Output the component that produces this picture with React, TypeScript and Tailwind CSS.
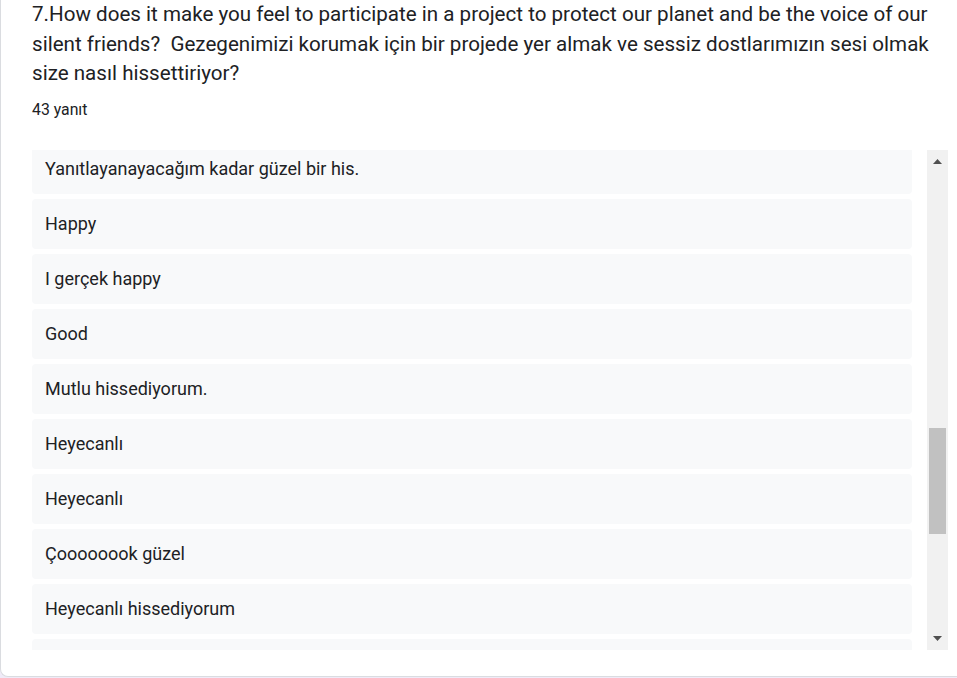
const answers = [
  'Yanıtlayanayacağım kadar güzel bir his.',
  'Happy',
  'I gerçek happy',
  'Good',
  'Mutlu hissediyorum.',
  'Heyecanlı',
  'Heyecanlı',
  'Çoooooook güzel',
  'Heyecanlı hissediyorum',
  '',
];

function ScrollBar() {
  return (
    <div className="relative h-full w-[21px] shrink-0 bg-[#f1f1f1]">
      <svg className="absolute left-[5px] top-[8px]" width="11" height="8" viewBox="0 0 11 8">
        <path d="M5.5 1 L10 6 L1 6 Z" fill="#505050" />
      </svg>
      <div className="absolute left-[2px] top-[278px] h-[106px] w-[17px] bg-[#c1c1c1]" />
      <svg className="absolute bottom-[8px] left-[5px]" width="11" height="8" viewBox="0 0 11 8">
        <path d="M1 2 L10 2 L5.5 7 Z" fill="#505050" />
      </svg>
    </div>
  );
}

export default function App() {
  return (
    <div className="h-[678px] w-[957px] overflow-hidden bg-[#f0ebf8] pb-px font-['Roboto',sans-serif] text-[#202124]">
      <div className="h-full rounded-bl-[8px] border-b border-l border-[#dadce0] bg-white pl-[31px]">
        <div className="pr-6 text-[20.6px] leading-[29.5px]">
          7.How does it make you feel to participate in a project to protect our planet and be the voice of our
          silent friends?&nbsp; Gezegenimizi korumak için bir projede yer almak ve sessiz dostlarımızın sesi olmak
          size nasıl hissettiriyor?
        </div>
        <div className="mt-[11px] text-[15.8px] leading-5">43 yanıt</div>

        <div className="mt-[30px] flex h-[500px] gap-[15px]">
          <div className="w-[880px] overflow-hidden">
            <div className="-mt-[6px] flex flex-col gap-[5px]">
              {answers.map((a, i) => (
                <div
                  key={i}
                  className="flex h-[50px] shrink-0 items-center rounded-[4px] bg-[#f8f9fa] pl-[13px] text-[18px]"
                >
                  {a}
                </div>
              ))}
            </div>
          </div>
          <ScrollBar />
        </div>
      </div>
    </div>
  );
}
